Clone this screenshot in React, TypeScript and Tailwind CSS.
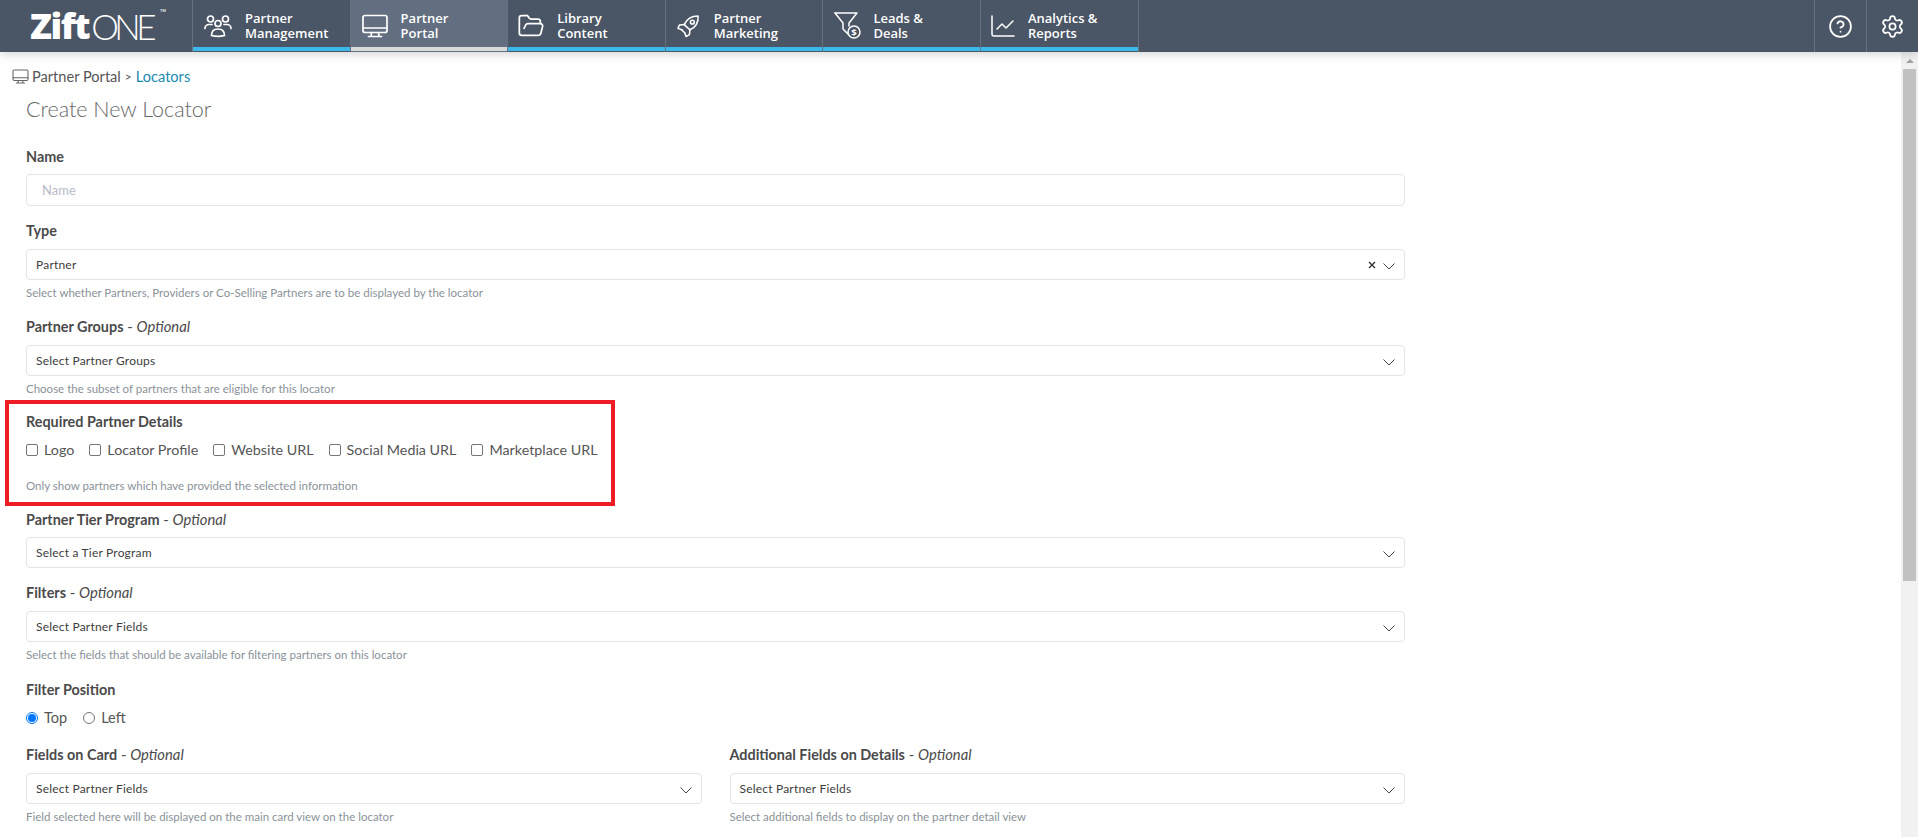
import { ReactNode } from "react"
import { CircleHelp, FolderOpen, Settings } from "lucide-react"

function PeopleIcon() {
  return (
    <svg viewBox="0 0 28 24" className="h-[24px] w-[28px]" fill="none" stroke="currentColor" strokeWidth="1.7" strokeLinecap="round">
      <circle cx="6.5" cy="5" r="3" />
      <circle cx="21.5" cy="5" r="3" />
      <circle cx="14" cy="9.5" r="3" />
      <path d="M1 14.5c0-2.5 2-4 4-4h3" />
      <path d="M27 14.5c0-2.5-2-4-4-4h-3" />
      <path d="M7.5 21.5c0-4 2.5-6.5 6.5-6.5s6.500 2.500 6.500 6.500c-4 1-9 1-13 0z" />
    </svg>
  )
}

function MonitorIcon({ className }: { className: string }) {
  return (
    <svg viewBox="0 0 26 24" className={className} fill="none" stroke="currentColor" strokeWidth="1.7" strokeLinecap="round" strokeLinejoin="round">
      <rect x="1" y="1.500" width="24" height="17" rx="2" />
      <path d="M1 14h24" />
      <path d="M9.500 18.500l-.5 4M16.500 18.500l.5 4M6.500 22.500h13" />
    </svg>
  )
}

function RocketIcon() {
  return (
    <svg viewBox="0 0 24 24" className="h-[24px] w-[23px]" fill="none" stroke="currentColor" strokeWidth="1.600" strokeLinecap="round" strokeLinejoin="round">
      <path d="M7.500 10.500C10 5 15 1.500 22 1.500c.5 7-3 12-8.500 14.500z" />
      <circle cx="16" cy="8" r="2" />
      <path d="M8 10.500l-5.500.5-1.500 3.500 4 1.500" />
      <path d="M13.500 15.500l-.5 5.500-3.500 2-1.500-4" />
      <path d="M5 16l3 3" />
    </svg>
  )
}

function FunnelIcon() {
  return (
    <svg viewBox="0 0 27 27" className="h-[27px] w-[27px]" fill="none" stroke="currentColor" strokeWidth="1.500" strokeLinecap="round" strokeLinejoin="round">
      <path d="M1 1h22l-8 10v3" />
      <path d="M1 1l8 10v6l5 5" />
      <circle cx="20" cy="20" r="6" />
      <text x="20" y="23.500" textAnchor="middle" fontSize="9.500" fontWeight="700" fill="currentColor" stroke="none" fontFamily="'Open Sans', sans-serif">$</text>
    </svg>
  )
}

function ChartIcon() {
  return (
    <svg viewBox="0 0 24 24" className="h-[24px] w-[24px]" fill="none" stroke="currentColor" strokeWidth="1.500" strokeLinecap="round" strokeLinejoin="round">
      <path d="M1 2v18a2 2 0 0 0 2 2h20" />
      <path d="M6 15l5-5 4 4 7-7" />
    </svg>
  )
}

function Chevron() {
  return (
    <svg viewBox="0 0 12 7" className="mt-[4px] h-[7px] w-[12px] text-[#444]" fill="none" stroke="currentColor" strokeWidth="1">
      <path d="M.5 .5L6 6l5.500-5.500" />
    </svg>
  )
}

function ClearIcon() {
  return (
    <svg viewBox="0 0 8 8" className="mr-[7px] h-[8px] w-[8px] text-[#333]" fill="none" stroke="currentColor" strokeWidth="1.400">
      <path d="M1 1l6 6M7 1L1 7" />
    </svg>
  )
}

const navItems = [
  { top: "Partner", bottom: "Management", icon: <PeopleIcon />, iconW: "w-[52px] pl-[11px]" },
  { top: "Partner", bottom: "Portal", icon: <MonitorIcon className="h-[24px] w-[26px]" />, iconW: "w-[50px] pl-[11px]", active: true },
  { top: "Library", bottom: "Content", icon: <FolderOpen size={28} strokeWidth={1.500} />, iconW: "w-[49px] pl-[9px]" },
  { top: "Partner", bottom: "Marketing", icon: <RocketIcon />, iconW: "w-[48px] pl-[11px]" },
  { top: "Leads &", bottom: "Deals", icon: <FunnelIcon />, iconW: "w-[50px] pl-[11px]" },
  { top: "Analytics &", bottom: "Reports", icon: <ChartIcon />, iconW: "w-[47px] pl-[10px]" },
]

function TopNav() {
  return (
    <div className="relative z-10 flex h-[52px] shrink-0 bg-[#4a5565] text-white shadow-[0_2px_10px_rgba(0,0,0,0.18)] font-['Open_Sans',sans-serif]">
      <div className="flex w-[193px] shrink-0 items-start border-r border-[#66717f] pl-[30px] pt-[3px] leading-none">
        <span className="text-[36px] leading-[46px] font-extrabold tracking-[-1.5px]">Zift</span>
        <span className="ml-[2px] font-['Lato',sans-serif] text-[35px] leading-[46px] font-light tracking-[-4.5px]">ONE</span>
        <span className="ml-[8px] mt-[6px] text-[4px] font-semibold">TM</span>
      </div>
      {navItems.map((item) => (
        <div
          key={item.bottom}
          className={`flex h-[52px] w-[157.6px] shrink-0 border-r border-[#66717f] pt-[1px] ${item.active ? "bg-[#636f80]" : ""}`}
        >
          <div className="flex h-full w-full flex-col">
            <div className="flex flex-1 items-center pt-[3px]">
              <div className={`${item.iconW} shrink-0`}>{item.icon}</div>
              <div className="text-[13px] leading-[15px] font-semibold">
                <div>{item.top}</div>
                <div>{item.bottom}</div>
              </div>
            </div>
            <div className={`mb-[1px] h-[4px] ${item.active ? "bg-[#d9dadc]" : "bg-[#3db8ea]"}`} />
          </div>
        </div>
      ))}
      <div className="ml-auto flex">
        <div className="flex w-[52px] items-center justify-center border-l border-[#66717f]">
          <CircleHelp size={25} strokeWidth={1.700} />
        </div>
        <div className="flex w-[52px] items-center justify-center border-l border-[#66717f]">
          <Settings size={25} strokeWidth={1.700} />
        </div>
      </div>
    </div>
  )
}

function Label({ text, optional }: { text: string; optional?: boolean }) {
  return (
    <div className="text-[14.4px] leading-[18px] text-[#4a4a4a]">
      <span className="font-bold">{text}</span>
      {optional && (
        <span className="text-[14.8px] font-normal">
          {" "}- <em>Optional</em>
        </span>
      )}
    </div>
  )
}

function Help({ children }: { children: ReactNode }) {
  return <div className="mt-[5px] text-[11.5px] leading-[15px] text-[#8a9299]">{children}</div>
}

function Select({ value, clearable, tight }: { value: string; clearable?: boolean; tight?: boolean }) {
  return (
    <div className={`${tight ? "mt-[8px]" : "mt-[9px]"} flex h-[31px] items-center rounded-[4px] border border-[#e0e6e8] pl-[9px] pr-[9px] text-[12px] text-[#3d3d3d]`}>
      <span className="flex-1 tracking-[0.2px]">{value}</span>
      {clearable && <ClearIcon />}
      <Chevron />
    </div>
  )
}

function Check({ text }: { text: string }) {
  return (
    <label className="flex items-center gap-[6px]">
      <input type="checkbox" className="h-[12px] w-[12px] appearance-none rounded-[2px] border border-[#767676] bg-white" />
      <span>{text}</span>
    </label>
  )
}

function Radio({ text, checked }: { text: string; checked?: boolean }) {
  return (
    <label className="flex items-center gap-[6px]">
      <span className={`flex h-[12px] w-[12px] items-center justify-center rounded-full border ${checked ? "border-[#0075ff]" : "border-[#767676]"}`}>
        {checked && <span className="h-[8px] w-[8px] rounded-full bg-[#0075ff]" />}
      </span>
      <span>{text}</span>
    </label>
  )
}

function Scrollbar() {
  return (
    <div className="flex w-[17px] shrink-0 flex-col bg-[#f1f1f1]">
      <div className="flex h-[17px] items-center justify-center">
        <div className="h-0 w-0 border-x-[4px] border-b-[4px] border-x-transparent border-b-[#a3a3a3]" />
      </div>
      <div className="mx-[2px] h-[512px] bg-[#c1c1c1]" />
    </div>
  )
}

export default function App() {
  return (
    <div className="flex h-[837px] w-full flex-col overflow-hidden bg-white font-['Lato',sans-serif]">
      <TopNav />
      <div className="flex min-h-0 flex-1">
        <div className="min-w-0 flex-1 overflow-hidden pl-[12px] pt-[16px]">
          <div className="flex items-center text-[14.6px] leading-[17px] text-[#555]">
            <MonitorIcon className="h-[15px] w-[17px] text-[#666]" />
            <span className="ml-[3px]">Partner Portal</span>
            <span className="mx-[4px] text-[12px]">&gt;</span>
            <span className="text-[#1a8bb0]">Locators</span>
          </div>
          <div className="w-[1393px] pl-[14px]">
            <h1 className="mt-[9px] text-[21.5px] leading-[30px] font-light text-[#666]">Create New Locator</h1>

            <div className="mt-[24px]">
              <Label text="Name" />
              <input
                placeholder="Name"
                className="mt-[8px] block h-[32px] w-full rounded-[4px] border border-[#e0e6e8] px-[15px] text-[13px] outline-none placeholder:text-[#b8bcc8]"
              />
            </div>

            <div className="mt-[16px]">
              <Label text="Type" />
              <Select value="Partner" clearable />
              <Help>Select whether Partners, Providers or Co-Selling Partners are to be displayed by the locator</Help>
            </div>

            <div className="mt-[17px]">
              <Label text="Partner Groups" optional />
              <Select value="Select Partner Groups" />
              <Help>Choose the subset of partners that are eligible for this locator</Help>
            </div>

            <div className="ml-[-21px] mt-[4px] h-[106px] w-[610px] border-4 border-[#ee1c25] pl-[17px] pt-[9px]">
              <Label text="Required Partner Details" />
              <div className="mt-[10px] flex gap-[15px] text-[14.3px] leading-[18px] text-[#555]">
                <Check text="Logo" />
                <Check text="Locator Profile" />
                <Check text="Website URL" />
                <Check text="Social Media URL" />
                <Check text="Marketplace URL" />
              </div>
              <div className="mt-[19px] text-[11.5px] leading-[15px] text-[#8a9299]">Only show partners which have provided the selected information</div>
            </div>

            <div className="mt-[4px]">
              <Label text="Partner Tier Program" optional />
              <Select value="Select a Tier Program" tight />
            </div>

            <div className="mt-[15px]">
              <Label text="Filters" optional />
              <Select value="Select Partner Fields" />
              <Help>Select the fields that should be available for filtering partners on this locator</Help>
            </div>

            <div className="mt-[19px]">
              <Label text="Filter Position" />
              <div className="mt-[10px] flex gap-[16px] text-[14.5px] leading-[18px] text-[#555]">
                <Radio text="Top" checked />
                <Radio text="Left" />
              </div>
            </div>

            <div className="mt-[18px] grid grid-cols-2 gap-[28px]">
              <div>
                <Label text="Fields on Card" optional />
                <Select value="Select Partner Fields" />
                <Help>Field selected here will be displayed on the main card view on the locator</Help>
              </div>
              <div>
                <Label text="Additional Fields on Details" optional />
                <Select value="Select Partner Fields" />
                <Help>Select additional fields to display on the partner detail view</Help>
              </div>
            </div>
          </div>
        </div>
        <Scrollbar />
      </div>
    </div>
  )
}
